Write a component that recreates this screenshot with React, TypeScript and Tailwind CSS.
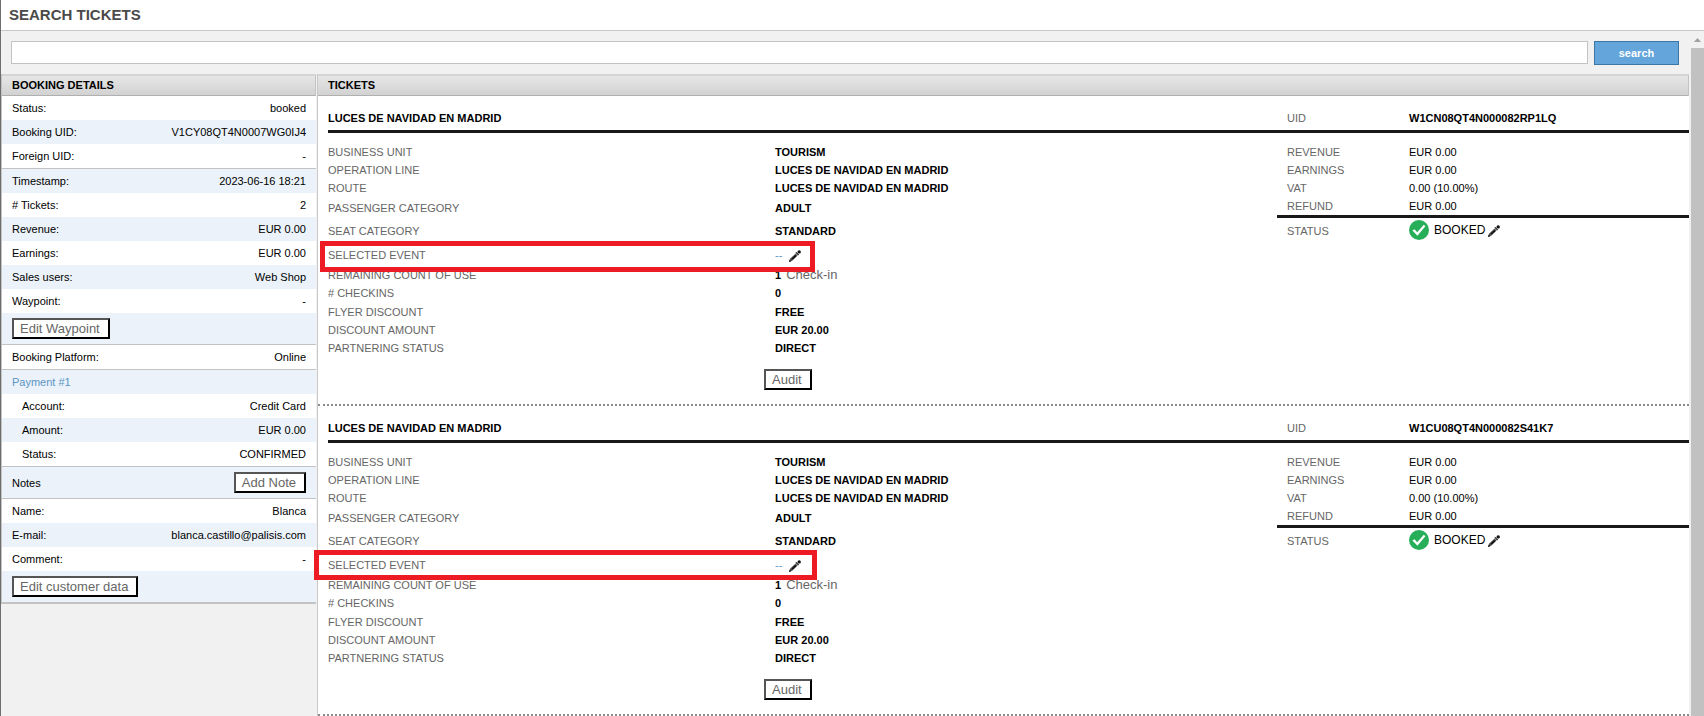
import type { ReactNode } from 'react';
import clsx from 'clsx';

interface DetailRow {
  label?: string;
  value?: string;
  button?: string;
  link?: boolean;
  indent?: boolean;
  divider?: boolean;
}

interface Ticket {
  title: string;
  uid: string;
  highlight: string;
}

const details: DetailRow[] = [
  { label: 'Status:', value: 'booked' },
  { label: 'Booking UID:', value: 'V1CY08QT4N0007WG0IJ4' },
  { label: 'Foreign UID:', value: '-', divider: true },
  { label: 'Timestamp:', value: '2023-06-16 18:21' },
  { label: '# Tickets:', value: '2' },
  { label: 'Revenue:', value: 'EUR 0.00' },
  { label: 'Earnings:', value: 'EUR 0.00' },
  { label: 'Sales users:', value: 'Web Shop' },
  { label: 'Waypoint:', value: '-' },
  { button: 'Edit Waypoint', divider: true },
  { label: 'Booking Platform:', value: 'Online', divider: true },
  { label: 'Payment #1', link: true },
  { label: 'Account:', value: 'Credit Card', indent: true },
  { label: 'Amount:', value: 'EUR 0.00', indent: true },
  { label: 'Status:', value: 'CONFIRMED', indent: true, divider: true },
  { label: 'Notes', button: 'Add Note', divider: true },
  { label: 'Name:', value: 'Blanca' },
  { label: 'E-mail:', value: 'blanca.castillo@palisis.com' },
  { label: 'Comment:', value: '-' },
  { button: 'Edit customer data', divider: true },
];

const tickets: Ticket[] = [
  {
    title: 'LUCES DE NAVIDAD EN MADRID',
    uid: 'W1CN08QT4N000082RP1LQ',
    highlight: '-left-2 -top-[2px] -bottom-[5px] w-[495px]',
  },
  {
    title: 'LUCES DE NAVIDAD EN MADRID',
    uid: 'W1CU08QT4N000082S41K7',
    highlight: '-left-[14px] -top-[3px] -bottom-[3px] w-[503px]',
  },
];

const PencilIcon = () => (
  <svg width="12" height="12" viewBox="0 0 12 12" aria-hidden="true">
    <path d="M0 12 L1 8.8 L6.6 3.6 L8.6 5.6 L3.2 10.8 Z" fill="#4a4a4a" />
    <path d="M3.2 9 L6.8 5.6" stroke="#111" strokeWidth="1.6" />
    <path d="M0 12 L0.7 9.8 L2.2 11.2 Z" fill="#111" />
    <path d="M6.4 2.8 L7.4 2 L10 4.6 L9.2 5.6 Z" fill="#222" />
    <circle cx="10.2" cy="1.9" r="1.7" fill="#111" />
  </svg>
);

const CheckIcon = () => (
  <svg width="20" height="20" viewBox="0 0 20 20" aria-hidden="true">
    <circle cx="10" cy="10" r="10" fill="#27ae58" />
    <path d="M3.4 10.6 L5.4 9.2 L8.2 12.2 L14.8 4.8 L16.4 6.2 L8.4 15.8 Z" fill="#fff" />
  </svg>
);

const OutsetButton = ({ children }: { children: ReactNode }) => (
  <button
    type="button"
    className="h-[21px] border-2 border-t-[#555] border-l-[#555] border-r-black border-b-black bg-white pr-2 pl-1.5 text-[13px] leading-4 whitespace-nowrap text-[#666]"
  >
    {children}
  </button>
);

const PanelTitle = ({ children }: { children: ReactNode }) => (
  <h2 className="h-[22px] border-t-2 border-r border-b border-t-[#d4d4d4] border-r-[#c3c3c3] border-b-[#b0b0b0] bg-linear-to-b from-[#e6e6e6] to-[#d2d2d2] pl-2.5 leading-[19px] font-bold">
    {children}
  </h2>
);

const Detail = ({ row }: { row: DetailRow }) => (
  <li
    className={clsx(
      'flex items-center justify-between pr-2.5 odd:bg-white even:bg-[#ebf2f9]',
      row.button ? 'py-[5px]' : 'leading-6',
      row.divider && 'border-b border-[#c3c3c3]',
      row.indent ? 'pl-5' : 'pl-2.5',
    )}
  >
    {row.label && (row.link
      ? <a href="#payment" className="text-[#5b95c5]">{row.label}</a>
      : <span>{row.label}</span>)}
    {row.value && <span>{row.value}</span>}
    {row.button && <OutsetButton>{row.button}</OutsetButton>}
  </li>
);

const BookingDetails = () => (
  <aside className="w-[315px] shrink-0">
    <div className="border-b border-l border-[#c3c3c3]">
      <PanelTitle>BOOKING DETAILS</PanelTitle>
      <ul>
        {details.map((row, i) => <Detail key={i} row={row} />)}
      </ul>
    </div>
  </aside>
);

interface FieldProps {
  label: string;
  className?: string;
  children: ReactNode;
}

const Field = ({ label, className = 'h-[18px]', children }: FieldProps) => (
  <div className={clsx('relative flex items-center', className)}>
    <dt className="w-[447px] shrink-0 text-[#666]">{label}</dt>
    <dd className="flex items-center font-bold">{children}</dd>
  </div>
);

const Amount = ({ label, children }: FieldProps) => (
  <div className="flex h-[18px] items-center pl-2.5">
    <dt className="w-[122px] text-[#666]">{label}</dt>
    <dd>{children}</dd>
  </div>
);

const TicketCard = ({ ticket }: { ticket: Ticket }) => (
  <article className="border-b-2 border-dotted border-[#8c8c8c] pb-3.5 pl-2.5">
    <header className="flex border-b-3 border-solid border-[#1a1818] pt-3.5 pb-1 leading-4">
      <h3 className="flex-1 font-bold">{ticket.title}</h3>
      <div className="flex w-[412px] pl-2.5">
        <span className="w-[122px] text-[#666]">UID</span>
        <span className="font-bold">{ticket.uid}</span>
      </div>
    </header>

    <div className="flex pt-2.5">
      <div className="flex-1">
        <dl>
          <Field label="BUSINESS UNIT">TOURISM</Field>
          <Field label="OPERATION LINE">{ticket.title}</Field>
          <Field label="ROUTE">{ticket.title}</Field>
          <Field label="PASSENGER CATEGORY" className="h-[22px]">ADULT</Field>
          <Field label="SEAT CATEGORY" className="h-6">STANDARD</Field>
          <Field label="SELECTED EVENT" className="z-10 h-6">
            <a href="#event" className="font-normal text-[#5b95c5]">--</a>
            <button type="button" aria-label="Edit selected event" className="ml-[7px] pt-0.5">
              <PencilIcon />
            </button>
            <span className={clsx('pointer-events-none absolute border-5 border-[#ed1c24]', ticket.highlight)} />
          </Field>
          <Field label="REMAINING COUNT OF USE" className="h-4">
            1
            <button type="button" className="ml-[5px] text-[13px] leading-4 font-normal text-[#666]">Check-in</button>
          </Field>
          <Field label="# CHECKINS" className="h-5">0</Field>
          <Field label="FLYER DISCOUNT">FREE</Field>
          <Field label="DISCOUNT AMOUNT">EUR 20.00</Field>
          <Field label="PARTNERING STATUS">DIRECT</Field>
        </dl>
        <div className="flex pt-3 pl-[436px]">
          <OutsetButton>Audit</OutsetButton>
        </div>
      </div>

      <dl className="w-[412px]">
        <Amount label="REVENUE">EUR 0.00</Amount>
        <Amount label="EARNINGS">EUR 0.00</Amount>
        <Amount label="VAT">0.00 (10.00%)</Amount>
        <Amount label="REFUND">EUR 0.00</Amount>
        <div className="flex h-[27px] items-center border-t-3 border-[#1a1818] pl-2.5">
          <dt className="w-[122px] pt-0.5 text-[#666]">STATUS</dt>
          <dd className="flex items-center text-xs">
            <CheckIcon />
            <span className="ml-[5px]">BOOKED</span>
            <button type="button" aria-label="Edit status" className="ml-[3px] pt-0.5">
              <PencilIcon />
            </button>
          </dd>
        </div>
      </dl>
    </div>
  </article>
);

const Scrollbar = () => (
  <div className="flex w-[15px] shrink-0 flex-col bg-[#f1f1f1] pl-0.5" aria-hidden="true">
    <div className="flex h-[17px] items-center justify-center">
      <svg width="7" height="4" viewBox="0 0 7 4">
        <path d="M0 4 L3.5 0 L7 4 Z" fill="#a0a0a0" />
      </svg>
    </div>
    <div className="flex-1 bg-[#c1c1c1]" />
  </div>
);

export default function App() {
  return (
    <div className="flex h-screen flex-col overflow-hidden border-l border-[#6e6e6e] bg-[#f1f1f1] font-['Liberation_Sans',Arial,sans-serif] text-[11px] leading-4 text-black">
      <header className="border-b border-[#c8c8c8] bg-white pl-2">
        <h1 className="text-[15px] leading-[30px] font-bold text-[#4a4a4a]">SEARCH TICKETS</h1>
      </header>

      <div className="flex min-h-0 flex-1">
        <main className="flex min-w-0 flex-1 flex-col">
          <form className="flex gap-1.5 pt-2.5 pr-2.5 pb-[9px] pl-2.5" onSubmit={e => e.preventDefault()}>
            <input
              type="text"
              aria-label="Search tickets"
              className="h-[23px] min-w-0 flex-1 border border-[#c3c3c3] bg-white px-1 outline-none"
            />
            <button
              type="submit"
              className="h-6 w-[85px] border border-[#3b76a5] bg-[#64a5db] text-[11px] font-bold text-white"
            >
              search
            </button>
          </form>

          <div className="flex min-h-0 flex-1">
            <BookingDetails />
            <section className="ml-px min-w-0 flex-1 border-l border-[#c8c8c8] bg-white">
              <PanelTitle>TICKETS</PanelTitle>
              {tickets.map(ticket => <TicketCard key={ticket.uid} ticket={ticket} />)}
            </section>
          </div>
        </main>
        <Scrollbar />
      </div>
    </div>
  );
}
